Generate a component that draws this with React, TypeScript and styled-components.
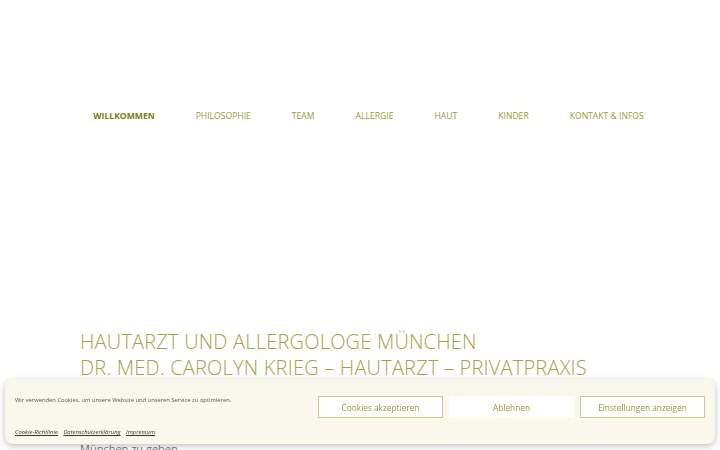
import { FC } from 'react';
import styled, { createGlobalStyle } from 'styled-components';

const GlobalStyle = createGlobalStyle`
  html, body {
    margin: 0;
    padding: 0;
    background: #fff;
    font-family: 'Open Sans', 'Liberation Sans', sans-serif;
  }
  * {
    box-sizing: border-box;
  }
`;

const navItems = [
  'Willkommen',
  'Philosophie',
  'Team',
  'Allergie',
  'Haut',
  'Kinder',
  'Kontakt & Infos',
];

const App: FC = () => {
  return (
    <>
      <GlobalStyle />
      <Page>
        <Header>
          <Nav>
            {navItems.map((item, i) => (
              <NavLink key={item} active={i === 0}>
                {item}
              </NavLink>
            ))}
          </Nav>
        </Header>
        <Hero>
          <Title>
            Hautarzt und Allergologe München
            <br />
            Dr. med. Carolyn Krieg – Hautarzt – Privatpraxis
          </Title>
          <Intro>München zu geben</Intro>
        </Hero>
      </Page>
      <CookieBanner>
        <CookieMain>
          <CookieText>
            Wir verwenden Cookies, um unsere Website und unseren Service zu
            optimieren.
          </CookieText>
          <CookieButtons>
            <CookieButton>Cookies akzeptieren</CookieButton>
            <CookieButton plain>Ablehnen</CookieButton>
            <CookieButton>Einstellungen anzeigen</CookieButton>
          </CookieButtons>
        </CookieMain>
        <CookieLinks>
          <CookieLink href="#">Cookie-Richtlinie</CookieLink>
          <CookieLink href="#">Datenschutzerklärung</CookieLink>
          <CookieLink href="#">Impressum</CookieLink>
        </CookieLinks>
      </CookieBanner>
    </>
  );
};

const Page = styled.div`
  width: 720px;
  height: 450px;
  overflow: hidden;
`;

const Header = styled.header`
  padding-top: 108px;
`;

const Nav = styled.nav`
  display: flex;
  justify-content: center;
  padding-left: 17px;
`;

const NavLink = styled.a<{ active?: boolean }>`
  padding: 0 20.5px;
  font-size: 8.6px;
  line-height: 16px;
  text-transform: uppercase;
  font-weight: ${(p) => (p.active ? 700 : 400)};
  color: ${(p) => (p.active ? '#7d7d12' : '#99993a')};
  cursor: pointer;
`;

const Hero = styled.section`
  padding: 205px 80px 0;
`;

const Title = styled.h1`
  margin: 0;
  font-weight: 300;
  font-size: 20px;
  line-height: 26px;
  letter-spacing: 0.01em;
  text-transform: uppercase;
  color: #a3a345;
`;

const Intro = styled.p`
  margin: 61px 0 0;
  font-size: 11px;
  line-height: 14px;
  color: #777;
`;

const CookieBanner = styled.div`
  position: fixed;
  left: 5px;
  right: 5px;
  bottom: 6px;
  height: 65px;
  background: #faf8ec;
  border-radius: 8px;
  box-shadow: 0 2px 6px rgba(0, 0, 0, 0.25);
  padding: 16px 10px 0 10px;
`;

const CookieMain = styled.div`
  display: flex;
  align-items: flex-start;
  justify-content: space-between;
`;

const CookieText = styled.p`
  margin: 0;
  font-size: 5.8px;
  line-height: 10px;
  color: #555;
`;

const CookieButtons = styled.div`
  display: flex;
  gap: 6px;
  margin-top: 1px;
`;

const CookieButton = styled.button<{ plain?: boolean }>`
  width: 125px;
  height: 22px;
  background: #fff;
  border: 1px solid ${(p) => (p.plain ? '#fff' : '#cfc894')};
  font-family: 'Open Sans', 'Liberation Sans', sans-serif;
  font-size: 8.3px;
  color: #99993a;
  cursor: pointer;
  padding: 0;
`;

const CookieLinks = styled.div`
  display: flex;
  gap: 5.5px;
  margin-top: 10px;
`;

const CookieLink = styled.a`
  font-size: 5.9px;
  line-height: 9px;
  font-style: italic;
  color: #333;
  text-decoration: underline;
`;

export default App;
